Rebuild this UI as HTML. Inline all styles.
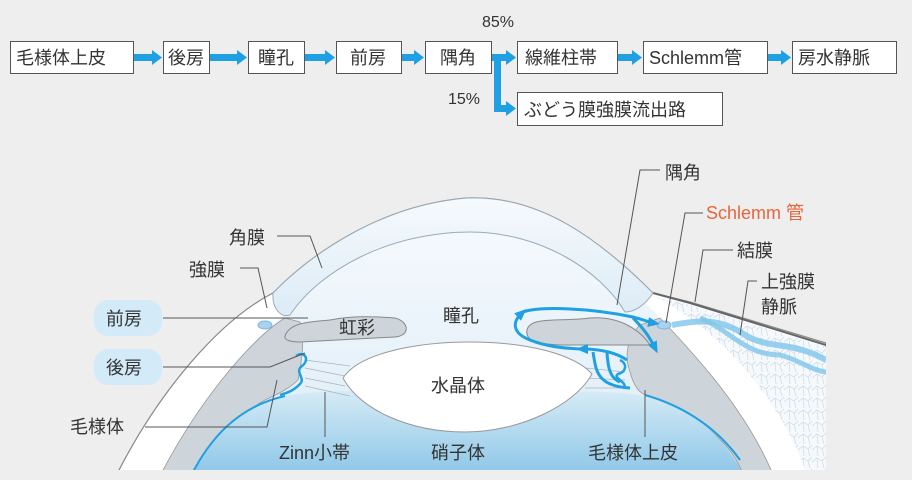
<!DOCTYPE html>
<html><head><meta charset="utf-8"><style>
body{margin:0;background:#eeeeee;}
svg{display:block;font-family:"Liberation Sans","Noto Sans CJK JP",sans-serif;}
</style></head><body>
<svg width="912" height="480" viewBox="0 0 912 480" xmlns="http://www.w3.org/2000/svg">
<defs>
<linearGradient id="vit" x1="0" y1="0" x2="0" y2="1"><stop offset="0" stop-color="#d6ebf6"/><stop offset="1" stop-color="#8fc8e8"/></linearGradient>
<linearGradient id="ac" x1="0" y1="0" x2="0" y2="1"><stop offset="0" stop-color="#f4f9fd"/><stop offset="1" stop-color="#dcecf7"/></linearGradient>
<linearGradient id="cor" x1="0" y1="0" x2="0" y2="1"><stop offset="0" stop-color="#f6fafd"/><stop offset="1" stop-color="#dcebf6"/></linearGradient>
<pattern id="tex" width="14" height="12" patternUnits="userSpaceOnUse"><path d="M0 6 L5 2 L10 5 L14 1 M5 2 L6 12 M10 5 L12 12" stroke="#c8d8e6" stroke-width="0.7" fill="none"/></pattern>
<clipPath id="clip"><rect x="0" y="150" width="826" height="320"/></clipPath>
<marker id="ah" markerWidth="12" markerHeight="12" refX="6" refY="6" orient="auto" markerUnits="userSpaceOnUse"><path d="M0 1 L12 6 L0 11 Z" fill="#1ea0e2"/></marker>
</defs>
<rect width="912" height="480" fill="#eeeeee"/>

<!-- flow chart -->
<g font-size="18" fill="#333" stroke="none">
<g fill="#fff" stroke="#555" stroke-width="1">
<rect x="10.5" y="41.5" width="123" height="32"/>
<rect x="163.5" y="41.5" width="46" height="32"/>
<rect x="248.5" y="41.5" width="56" height="32"/>
<rect x="336.5" y="41.5" width="65" height="32"/>
<rect x="425.5" y="41.5" width="66" height="32"/>
<rect x="517.5" y="41.5" width="100" height="32"/>
<rect x="643.5" y="41.5" width="124" height="32"/>
<rect x="792.5" y="41.5" width="104" height="32"/>
<rect x="517.5" y="92.5" width="205" height="33"/>
</g>
<text x="16" y="64">毛様体上皮</text>
<text x="168" y="64">後房</text>
<text x="258" y="64">瞳孔</text>
<text x="350" y="64">前房</text>
<text x="440" y="64">隅角</text>
<text x="525" y="64">線維柱帯</text>
<text x="649" y="64">Schlemm管</text>
<text x="798" y="64">房水静脈</text>
<text x="524" y="116">ぶどう膜強膜流出路</text>
<text x="482" y="27" font-size="16">85%</text>
<text x="448" y="104" font-size="16">15%</text>
</g>
<g fill="#1ea0e2">
<rect x="134" y="54" width="20" height="7"/><path d="M152 50 L162 57.5 L152 65Z"/>
<rect x="210" y="54" width="29" height="7"/><path d="M237 50 L247 57.5 L237 65Z"/>
<rect x="305" y="54" width="22" height="7"/><path d="M325 50 L335 57.5 L325 65Z"/>
<rect x="402" y="54" width="14" height="7"/><path d="M414 50 L424 57.5 L414 65Z"/>
<rect x="492" y="54" width="16" height="7"/><path d="M506 50 L516 57.5 L506 65Z"/>
<rect x="494" y="54" width="7" height="58"/>
<rect x="494" y="105" width="14" height="7"/><path d="M506 101 L516 108.5 L506 116Z"/>
<rect x="618" y="54" width="16" height="7"/><path d="M632 50 L642 57.5 L632 65Z"/>
<rect x="768" y="54" width="15" height="7"/><path d="M781 50 L791 57.5 L781 65Z"/>
</g>

<!-- eye -->
<g clip-path="url(#clip)">
<!-- outer white eyeball -->
<path d="M118 472 C160 390 220 320 273 293 C310 255 380 205 467 198 C540 195 600 240 653 293 L690 302 L826 343 L826 472 Z" fill="#ffffff" stroke="#888" stroke-width="1.2"/>
<!-- textured episclera -->
<path d="M655 296 L690 305 L826 347 L826 472 L806 472 C780 400 720 330 660 300Z" fill="#f6f9fc"/>
<path d="M655 296 L690 305 L826 347 L826 472 L806 472 C780 400 720 330 660 300Z" fill="url(#tex)"/>
<path d="M653 293 L690 303 L826 345" fill="none" stroke="#666" stroke-width="2"/>
<!-- interior light blue -->
<path d="M162 472 C200 400 250 340 285 315 C330 265 400 232 470 232 C560 232 625 280 660 318 C700 360 745 410 772 472 Z" fill="url(#ac)"/>
<!-- grey ciliary band left -->
<path d="M162 472 C200 400 250 340 285 318 L300 322 C305 340 302 360 298 380 C290 388 280 393 265 400 C230 420 205 445 193 472 Z" fill="#cdd4da" stroke="#999" stroke-width="0.8"/>
<!-- grey ciliary band right -->
<path d="M772 472 C745 410 700 360 660 318 L640 325 C630 335 625 350 628 365 C632 380 635 390 645 395 C690 410 730 440 742 472 Z" fill="#cdd4da" stroke="#999" stroke-width="0.8"/>
<!-- vitreous -->
<path d="M193 472 C215 430 245 405 285 396 C320 390 360 390 420 392 L560 392 C610 390 640 394 660 400 C700 415 725 440 742 472 Z" fill="url(#vit)"/>
<path d="M193 472 C215 430 245 405 285 396" fill="none" stroke="#1ea0e2" stroke-width="2"/>
<path d="M645 395 C680 405 715 425 740 460" fill="none" stroke="#1ea0e2" stroke-width="2"/>
<!-- zonules -->
<g stroke="#aab4bc" stroke-width="0.8">
<line x1="305" y1="360" x2="350" y2="366"/><line x1="305" y1="368" x2="345" y2="376"/><line x1="305" y1="378" x2="345" y2="386"/><line x1="305" y1="386" x2="350" y2="396"/>
<line x1="585" y1="368" x2="625" y2="372"/><line x1="585" y1="378" x2="625" y2="380"/><line x1="585" y1="388" x2="625" y2="388"/>
</g>
<!-- lens -->
<path d="M343 378 C360 352 420 342 470 342 C530 342 575 355 592 374 C575 405 520 432 465 432 C410 432 360 410 343 378Z" fill="#fff" stroke="#999" stroke-width="1"/>
<!-- cornea -->
<path d="M273 293 C310 255 380 205 467 198 C540 195 600 240 653 293 C645 305 635 312 625 312 C600 270 540 232 470 232 C390 232 320 270 290 315 C280 318 272 308 273 293 Z" fill="url(#cor)" stroke="#9aaab6" stroke-width="1"/>
<!-- iris -->
<path d="M285 336 C290 322 310 322 330 320 C350 316 370 316 395 318 C410 322 410 336 395 337 L300 342 C290 342 284 340 285 336Z" fill="#cdd4da" stroke="#888" stroke-width="1"/>
<path d="M527 330 C530 316 560 322 590 318 C620 316 640 330 650 345 L560 345 C535 344 525 340 527 330Z" fill="#cdd4da" stroke="#888" stroke-width="1"/>
<!-- ciliary epithelium squiggles -->
<path d="M296 356 C305 350 310 360 302 366 C294 372 306 378 300 384 C294 390 290 392 280 395" fill="none" stroke="#1ea0e2" stroke-width="2.5"/>
<path d="M620 360 C628 364 626 372 618 374 C612 378 628 382 624 388" fill="none" stroke="#1ea0e2" stroke-width="2.5"/>
<!-- schlemm + veins -->
<ellipse cx="664" cy="325" rx="7" ry="4" fill="#a8d2ee" stroke="#7ab8e0"/>
<path d="M672 325 C700 320 720 318 745 335 C770 350 790 340 826 360" fill="none" stroke="#7fc6ea" stroke-width="6" opacity="0.8"/>
<path d="M700 318 C730 330 745 355 780 355 C800 360 810 370 826 372" fill="none" stroke="#7fc6ea" stroke-width="5" opacity="0.8"/>
<ellipse cx="265" cy="325" rx="7" ry="4" fill="#a8d2ee" stroke="#7ab8e0"/>
<!-- flow arrows -->
<g fill="none" stroke="#1ea0e2" stroke-width="3">
<path d="M627 360 C615 352 600 349 582 349" marker-end="url(#ah)"/>
<path d="M593 352 C596 370 596 386 630 388"/>
<path d="M607 353 C608 368 610 378 620 382"/>
<path d="M580 349 C560 348 545 346 530 340 C512 333 512 322 522 313" marker-end="url(#ah)"/>
<path d="M523 312 C540 306 590 308 633 317 C645 320 648 322 654 323" marker-end="url(#ah)"/>
<path d="M633 318 C645 330 650 338 655 348" marker-end="url(#ah)"/>
</g>
</g>

<!-- leader lines -->
<g fill="none" stroke="#555" stroke-width="1">
<path d="M660 170 L640 170 L617 305"/>
<path d="M703 213 L685 213 L666 323"/>
<path d="M733 250 L703 250 L695 302"/>
<path d="M757 281 L748 281 L740 335"/>
<path d="M277 236 L310 236 L322 268"/>
<path d="M240 268 L258 268 L267 308"/>
<path d="M163 318 L308 318"/>
<path d="M163 367 L270 367 L305 353"/>
<path d="M145 427 L267 427 L277 380"/>
<path d="M325 392 L325 437"/>
<path d="M645 390 L645 437"/>
</g>
<rect x="94" y="300" width="68" height="36" rx="14" fill="#d3eaf8"/>
<rect x="94" y="349" width="68" height="36" rx="14" fill="#d3eaf8"/>
<g font-size="18" fill="#333">
<text x="665" y="179">隅角</text>
<text x="706" y="219" fill="#e8643c">Schlemm 管</text>
<text x="737" y="257">結膜</text>
<text x="761" y="288">上強膜</text>
<text x="761" y="313">静脈</text>
<text x="229" y="244">角膜</text>
<text x="189" y="276">強膜</text>
<text x="106" y="325">前房</text>
<text x="106" y="374">後房</text>
<text x="70" y="433">毛様体</text>
<text x="339" y="334">虹彩</text>
<text x="443" y="322">瞳孔</text>
<text x="431" y="392">水晶体</text>
<text x="279" y="459">Zinn小帯</text>
<text x="431" y="459">硝子体</text>
<text x="588" y="459">毛様体上皮</text>
</g>
</svg>
</body></html>
